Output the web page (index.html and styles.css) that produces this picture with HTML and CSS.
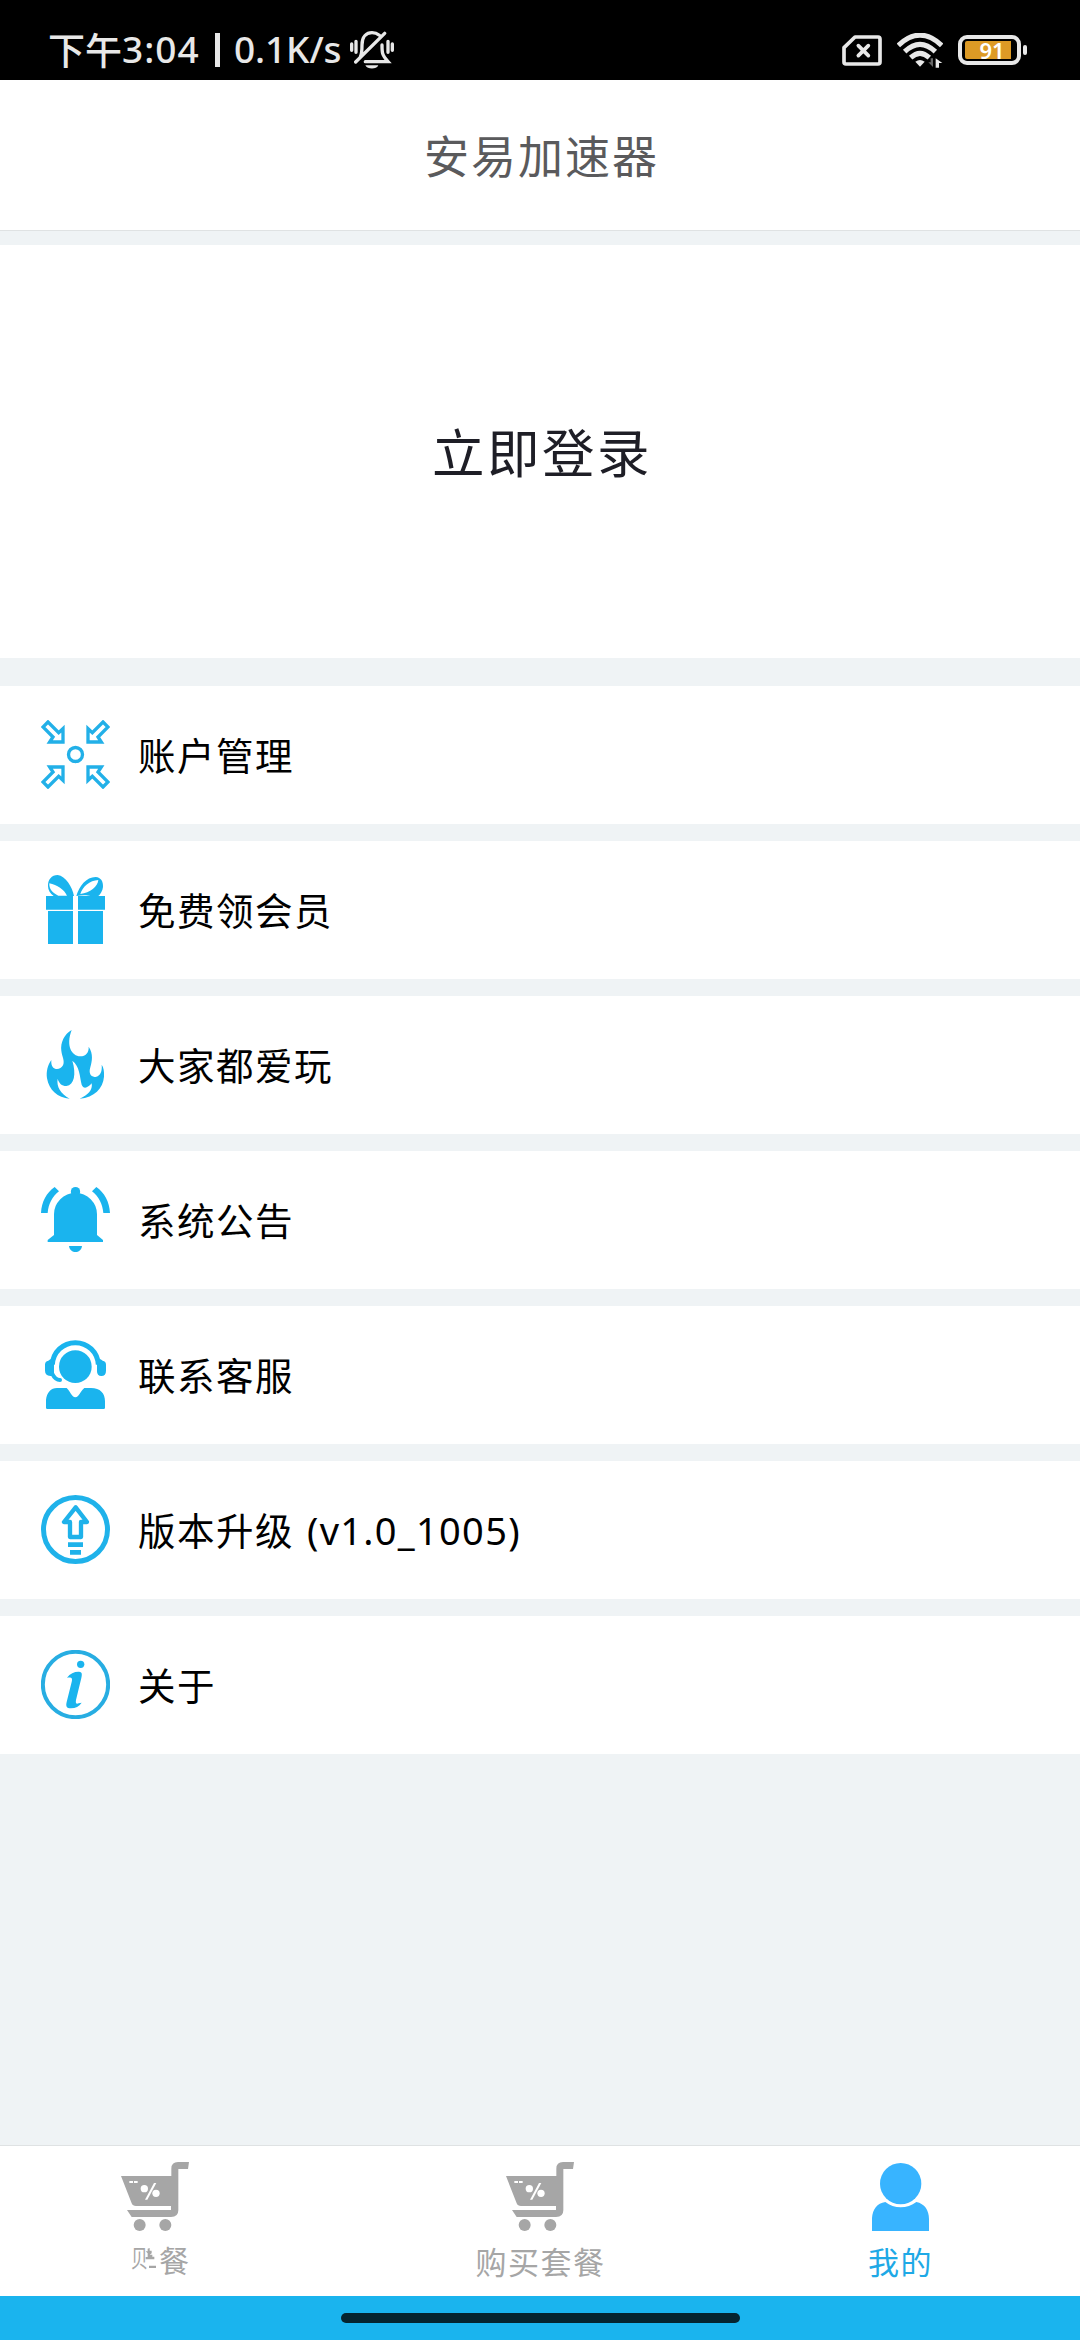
FILE: index.html
```html
<!DOCTYPE html>
<html lang="zh-CN">
<head>
<meta charset="utf-8">
<title>安易加速器</title>
<link rel="stylesheet" href="styles.css">
</head>
<body>
<div class="screen">
  <div class="status">
    <span class="status-ampm">下午</span><span class="status-time">3:04</span><span class="status-sep"></span><span class="status-speed">0.1K/s</span>
    <svg class="icon-mute" viewBox="0 0 132 114" width="44" height="38" fill="none" stroke="#e8e8e8" stroke-width="10" stroke-linecap="round">
      <path d="M5 39V58M18 31V64M114 31V64M127 39V58M31 78C36 68 36 60 36 42C36 16 50 5 66 5C76 5 82 8 88 13M96 42C96 66 96 72 114 92H46M104 7L17 93"/>
      <path d="M46 103H85C80 116 52 116 46 103Z" fill="#e8e8e8" stroke="none"/>
    </svg>
    <div class="status-right">
      <svg viewBox="0 0 120 93" width="40" height="31" fill="none" stroke="#e8e8e8" stroke-width="11" stroke-linejoin="round">
        <path d="M39 6H108Q114 6 114 12V81Q114 87 108 87H12Q6 87 6 81V38Z"/>
        <path d="M49 32L79 62M79 32L49 62" stroke-width="11" stroke-linecap="round"/>
      </svg>
      <svg class="icon-wifi" viewBox="0 0 138 105" width="46" height="35" fill="none" stroke="#e8e8e8" stroke-width="15">
        <path d="M4 37Q69-24 134 37M23 56Q69 12 115 56M41 74Q69 48 97 74"/>
        <path d="M55 86Q69 76 83 86L69 101Z" fill="#e8e8e8" stroke="none"/>
        <path d="M108 76V102L94 88H101V76Z" fill="#666" stroke="none"/>
        <path d="M116 104V76L136 90H126V104Z" fill="#e8e8e8" stroke="none"/>
      </svg>
      <div class="battery"><div class="battery-fill">91</div></div>
      <div class="battery-tip"></div>
    </div>
  </div>

  <div class="header">安易加速器</div>
  <div class="login">立即登录</div>

  <div class="menu">
    <div class="row">
      <svg class="row-icon" viewBox="0 0 207 207" fill="none" stroke="#22b0e8" stroke-width="10">
        <path d="M21 6L6 21L36 51L26 66H66V26L53 38Z"/>
        <path d="M186 6L201 21L171 51L181 66H141V26L154 38Z"/>
        <path d="M21 201L6 186L36 156L26 141H66V181L53 169Z"/>
        <path d="M186 201L201 186L171 156L181 141H141V181L154 169Z"/>
        <circle cx="103.500" cy="103.500" r="21" stroke-width="10"/>
      </svg>
      <span class="row-text">账户管理</span>
    </div>
    <div class="row">
      <svg class="row-icon" viewBox="0 0 207 207" fill="#1ab4ee">
        <path d="M15 63H96V104H15ZM111 63H192V104H111ZM21 108H96V207H21ZM111 108H186V207H111Z"/>
        <path fill-rule="evenodd" d="M99 63C94 36 74 3 50 0C32 0 20 14 21 34C21 46 28 56 38 63ZM25 25C48 30 70 44 78 62H52C34 54 24 42 25 25Z"/>
        <path fill-rule="evenodd" d="M106 63C114 34 136 6 164 6C180 7 187 20 186 36C185 48 178 58 172 63H148C140 61 126 60 106 63ZM118 57C124 36 146 16 172 15C170 34 148 54 118 57Z"/>
      </svg>
      <span class="row-text">免费领会员</span>
    </div>
    <div class="row">
      <svg class="row-icon" viewBox="0 0 207 207" fill="#1ab4ee">
        <path d="M92 0C70 12 58 38 61 62C63 80 72 92 66 106C58 122 28 124 31 90C20 105 15 125 18 145C24 180 50 204 86 206C58 190 46 170 50 146C54 160 62 168 76 168C100 164 106 132 94 92C116 108 116 140 122 164C128 180 142 172 152 160C156 180 140 196 116 206C160 202 186 175 189 140C190 125 188 112 182 104C184 124 178 136 166 140C150 144 142 130 148 112C153 95 158 72 143 50C144 68 134 79 118 79C92 78 74 48 92 0Z"/>
      </svg>
      <span class="row-text">大家都爱玩</span>
    </div>
    <div class="row">
      <svg class="row-icon" viewBox="0 0 207 207" fill="#1ab4ee">
        <circle cx="103.500" cy="20" r="14"/>
        <path d="M39 150V88A64.500 64.500 0 0 1 168 88V150L186 165V171H20V165Z"/>
        <path d="M84 183H123C120 207 87 207 84 183Z"/>
        <path d="M0 84C2 50 16 24 41 6L54 19C34 34 22 58 20 84ZM207 84C205 50 191 24 166 6L153 19C173 34 185 58 187 84Z"/>
      </svg>
      <span class="row-text">系统公告</span>
    </div>
    <div class="row">
      <svg class="row-icon" viewBox="0 0 207 207" fill="#1ab4ee">
        <circle cx="103" cy="80" r="49"/>
        <path d="M34 74C36 36 66 8 103 8S170 36 172 74" fill="none" stroke="#1ab4ee" stroke-width="15"/>
        <path d="M39 58V108H28Q12 106 12 92V74Q12 64 22 62L28 58ZM168 58H179L185 62Q195 64 195 74V92Q195 108 181 108Q168 108 168 94Z"/>
        <path d="M33 100C40 114 48 120 57 120" fill="none" stroke="#1ab4ee" stroke-width="12" stroke-linecap="round"/>
        <path d="M15 203V180C17 158 30 144 48 144H77C84 150 88 160 95 168Q103 176 111 168C118 160 122 150 130 144H150C178 144 192 160 192 184V203Q192 207 188 207H19Q15 207 15 203Z"/>
      </svg>
      <span class="row-text">联系客服</span>
    </div>
    <div class="row">
      <svg class="row-icon" viewBox="0 0 207 207" fill="none" stroke="#1fb2ea">
        <circle cx="103.500" cy="103.500" r="96" stroke-width="15"/>
        <path d="M104 37L69 81H87V126H120V81H138Z" stroke-width="13" stroke-linejoin="round"/>
        <path d="M81 149H126M87 172H120" stroke-width="14"/>
      </svg>
      <span class="row-text">版本升级<span class="version">(v1.0_1005)</span></span>
    </div>
    <div class="row">
      <svg class="row-icon" viewBox="0 0 207 207" fill="#1ab4ee">
        <circle cx="103.500" cy="103.500" r="98" fill="none" stroke="#27ade2" stroke-width="12"/>
        <circle cx="119" cy="43" r="11"/>
        <path d="M78 83C88 70 104 64 117 66C124 67 123 76 121 84L105 150C103 161 107 163 113 160L122 158C114 169 104 175 90 175C76 175 74 168 77 156L92 96C95 84 92 81 78 83Z"/>
      </svg>
      <span class="row-text">关于</span>
    </div>
  </div>

  <div class="tabs">
    <div class="tab tab-first">
      <svg viewBox="0 0 204 207" width="68" height="69" fill="#a6a6a6">
        <path d="M0 42H151V20Q151 0 171 0H204L201 21H172V145Q172 165 150 165H32L18 144H150V132H45Q35 132 32 124Z"/>
        <circle cx="56" cy="189" r="18"/><circle cx="133" cy="189" r="18"/>
        <g fill="#fff"><path d="M25 57H36V63H25ZM39 57H50V63H39Z"/><circle cx="70" cy="80" r="11"/><circle cx="105" cy="94" r="11"/><path d="M99 63H106L79 113H72Z"/></g>
      </svg>
      <div class="tab-broken"><span class="shell">贝</span><svg viewBox="0 0 36 66" width="12" height="22" fill="#a6a6a6"><path d="M2 10H8V2L14 0V8H20V16L14 20H22V26H28V34H2V27H8V16ZM12 53H33V60H12Z"/></svg><span>餐</span></div>
    </div>
    <div class="tab">
      <svg viewBox="0 0 204 207" width="68" height="69" fill="#a6a6a6">
        <path d="M0 42H151V20Q151 0 171 0H204L201 21H172V145Q172 165 150 165H32L18 144H150V132H45Q35 132 32 124Z"/>
        <circle cx="56" cy="189" r="18"/><circle cx="133" cy="189" r="18"/>
        <g fill="#fff"><path d="M25 57H36V63H25ZM39 57H50V63H39Z"/><circle cx="70" cy="80" r="11"/><circle cx="105" cy="94" r="11"/><path d="M99 63H106L79 113H72Z"/></g>
      </svg>
      <div class="tab-label">购买套餐</div>
    </div>
    <div class="tab active">
      <svg viewBox="0 0 171 207" width="57" height="69" fill="#38b4ff">
        <circle cx="86" cy="65" r="62"/>
        <path d="M0 207V168C2 143 15 123 40 120C66 141 106 141 133 120C158 125 171 145 171 171V207Z"/>
      </svg>
      <div class="tab-label">我的</div>
    </div>
  </div>
  <div class="home"><div class="home-bar"></div></div>
</div>
</body>
</html>
```
FILE: styles.css
```css
* { box-sizing: border-box; }
body { margin: 0; }
svg { display: block; flex: none; }
.screen {
  width: 1080px;
  height: 2340px;
  display: flex;
  flex-direction: column;
  background: #eff3f5;
  font-family: "Noto Sans", "Noto Sans CJK SC", sans-serif;
  white-space: nowrap;
  overflow: hidden;
}
.status {
  height: 80px;
  flex: none;
  display: flex;
  align-items: center;
  padding: 20px 53px 0 48px;
  background: #000;
  color: #e8e8e8;
  font-size: 37px;
  font-weight: 500;
  line-height: 60px;
}
.status-ampm { font-family: "Noto Sans CJK SC", sans-serif; width: 74px; height: 62px; }
.status-time { width: 93px; height: 62px; letter-spacing: 1px; }
.status-sep { width: 5px; height: 34px; margin-right: 14px; background: #e8e8e8; }
.status-speed { width: 116px; height: 62px; letter-spacing: -0.100px; }
.status-right { margin-left: auto; display: flex; align-items: center; }
.icon-wifi { margin: 0 15px; }
.battery {
  width: 63px;
  height: 30px;
  padding: 2px 3px;
  border: 4px solid #e8e8e8;
  border-radius: 9px;
}
.battery-fill {
  width: 46px;
  height: 18px;
  padding-left: 8px;
  border-radius: 2px 0 0 2px;
  background: #dd9a25;
  color: #fff;
  font-size: 22px;
  font-weight: 600;
  line-height: 19px;
  text-align: center;
}
.battery-tip { width: 4px; height: 10px; margin-left: 2px; border-radius: 2px; background: #e8e8e8; }
.header {
  height: 151px;
  flex: none;
  padding-left: 3px;
  border-bottom: 1px solid #dfe2e3;
  background: #fff;
  color: #5a5a5c;
  font-size: 45px;
  letter-spacing: 2px;
  line-height: 153px;
  text-align: center;
}
.login {
  height: 413px;
  flex: none;
  margin: 14px 0 28px;
  padding-left: 4px;
  background: #fff;
  color: #1e1e26;
  font-size: 52.500px;
  letter-spacing: 2.500px;
  line-height: 415px;
  text-align: center;
}
.menu { display: flex; flex-direction: column; gap: 17px; }
.row {
  height: 138px;
  display: flex;
  align-items: center;
  gap: 28px;
  padding-left: 41px;
  background: #fff;
  color: #000;
  font-size: 37.500px;
  letter-spacing: 1.500px;
}
.row-icon { width: 69px; height: 69px; margin-bottom: 1px; }
.row-text { padding-bottom: 3px; }
.version { margin-left: 13px; font-size: 38px; letter-spacing: 1.300px; }
.tabs {
  height: 151px;
  flex: none;
  display: grid;
  grid-template-columns: repeat(3, 1fr);
  margin-top: auto;
  border-top: 1px solid #dfe2e3;
  background: #fff;
  color: #a6a6a6;
}
.tab { display: flex; flex-direction: column; align-items: center; padding-top: 16px; }
.tab-first { align-items: flex-start; padding-left: 121px; }
.tab-label { margin-top: 8px; padding-left: 1px; font-size: 31px; letter-spacing: 1.500px; line-height: 46px; }
.tab-broken {
  display: flex;
  align-items: flex-start;
  margin: 12px 0 0 10px;
  font-size: 30px;
  line-height: 36px;
}
.tab-broken .shell { width: 14px; font-size: 24px; line-height: 30px; transform: scaleX(0.700); transform-origin: left; }
.tab-broken svg { margin: 5px 2px 0 0; }
.active { color: #1ea9e6; }
.home { height: 44px; flex: none; padding-top: 17px; background: #1ab4ee; }
.home-bar { width: 399px; height: 10px; margin: 0 auto; border-radius: 5px; background: #05242f; }
```
